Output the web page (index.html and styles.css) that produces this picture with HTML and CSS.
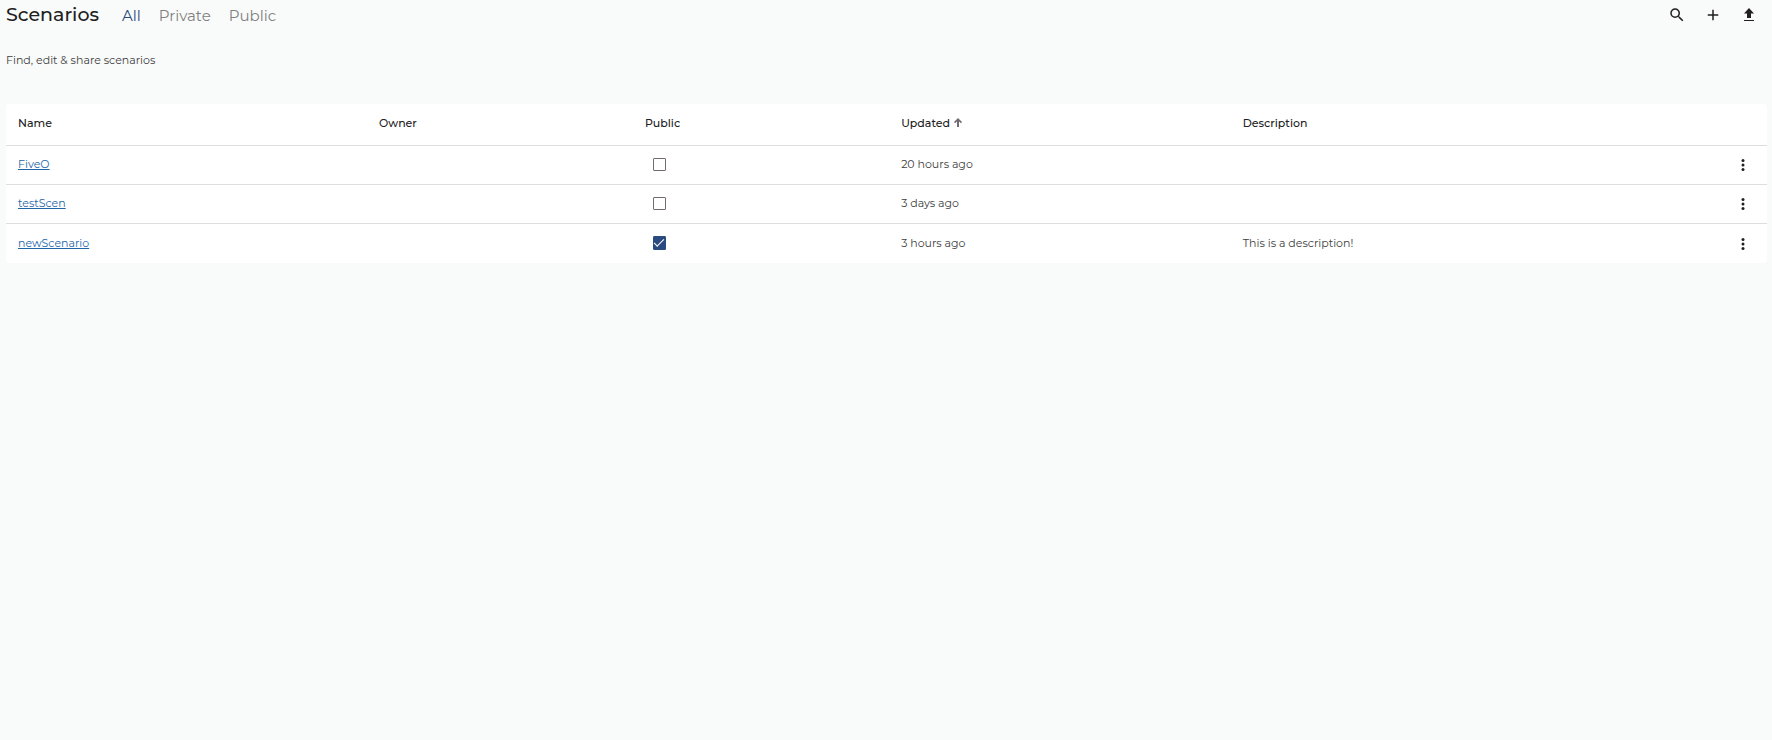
FILE: index.html
```html
<!DOCTYPE html>
<html lang="en">
<head>
    <meta charset="UTF-8">
    <meta name="viewport" content="width=device-width, initial-scale=1.0">
    <title>Scenarios</title>
    <link rel="stylesheet" href="styles.css">
</head>
<body>
    <header class="page-header">
        <h1 class="page-title">Scenarios</h1>
        <nav class="filters">
            <a href="#all" class="active">All</a>
            <a href="#private">Private</a>
            <a href="#public">Public</a>
        </nav>
        <div class="header-actions">
            <button type="button" class="icon-button" aria-label="Search">
                <svg viewBox="0 0 24 24"><path d="M15.5 14h-.79l-.28-.27A6.471 6.471 0 0 0 16 9.5 6.5 6.5 0 1 0 9.5 16c1.61 0 3.09-.59 4.23-1.57l.27.28v.79l5 4.99L20.49 19l-4.99-5zm-6 0C7.01 14 5 11.99 5 9.5S7.01 5 9.5 5 14 7.01 14 9.5 11.99 14 9.5 14z"/></svg>
            </button>
            <button type="button" class="icon-button" aria-label="Add scenario">
                <svg viewBox="0 0 24 24"><path d="M19 13h-6v6h-2v-6H5v-2h6V5h2v6h6z"/></svg>
            </button>
            <button type="button" class="icon-button" aria-label="Upload scenario">
                <svg viewBox="0 0 18 18"><path d="M9 2l5 5.500h-3V12H7V7.500H4zM4 14h10v1H4z"/></svg>
            </button>
        </div>
    </header>

    <p class="intro">Find, edit &amp; share scenarios</p>

    <table class="scenarios">
        <thead>
            <tr>
                <th class="col-name">Name</th>
                <th class="col-owner">Owner</th>
                <th class="col-public">Public</th>
                <th class="col-updated">
                    <span class="sorted">Updated
                        <svg viewBox="0 0 8 9"><path d="M4 0l4 4-1 1.200L5 3.500V9H3V3.500L1 5.200 0 4z"/></svg>
                    </span>
                </th>
                <th class="col-description">Description</th>
                <th class="col-menu"></th>
            </tr>
        </thead>
        <tbody>
            <tr>
                <td><a href="#fiveo">FiveO</a></td>
                <td></td>
                <td><input type="checkbox" aria-label="FiveO is public"></td>
                <td>20 hours ago</td>
                <td></td>
                <td class="col-menu">
                    <button type="button" class="icon-button" aria-label="FiveO menu">
                        <svg viewBox="0 0 24 24"><circle cx="12" cy="6" r="2"/><circle cx="12" cy="12" r="2"/><circle cx="12" cy="18" r="2"/></svg>
                    </button>
                </td>
            </tr>
            <tr>
                <td><a href="#testscen">testScen</a></td>
                <td></td>
                <td><input type="checkbox" aria-label="testScen is public"></td>
                <td>3 days ago</td>
                <td></td>
                <td class="col-menu">
                    <button type="button" class="icon-button" aria-label="testScen menu">
                        <svg viewBox="0 0 24 24"><circle cx="12" cy="6" r="2"/><circle cx="12" cy="12" r="2"/><circle cx="12" cy="18" r="2"/></svg>
                    </button>
                </td>
            </tr>
            <tr>
                <td><a href="#newscenario">newScenario</a></td>
                <td></td>
                <td><input type="checkbox" aria-label="newScenario is public" checked></td>
                <td>3 hours ago</td>
                <td>This is a description!</td>
                <td class="col-menu">
                    <button type="button" class="icon-button" aria-label="newScenario menu">
                        <svg viewBox="0 0 24 24"><circle cx="12" cy="6" r="2"/><circle cx="12" cy="12" r="2"/><circle cx="12" cy="18" r="2"/></svg>
                    </button>
                </td>
            </tr>
        </tbody>
    </table>
</body>
</html>
```

FILE: styles.css
```css
body {
    font-family: Montserrat, Inter, sans-serif;
    font-size: 11px;
    line-height: 16px;
    margin: 0;
    padding: 0 5px 0 6px;
    background-color: #f9fbfa;
    color: #404040;
}
.page-header {
    display: flex;
    align-items: center;
    height: 29px;
}
.page-title {
    margin: 0;
    font-size: 19px;
    font-weight: 500;
    line-height: 28px;
    color: #212121;
}
.filters {
    display: flex;
    gap: 18px;
    margin-left: 23px;
    padding-top: 2px;
    font-size: 15px;
    line-height: 24px;
}
.filters a {
    color: #808080;
    text-decoration: none;
}
.filters .active {
    color: #2a4b80;
}
.header-actions {
    display: flex;
    gap: 18px;
    margin-left: auto;
    padding-right: 9px;
}
.icon-button {
    display: block;
    width: 18px;
    height: 18px;
    padding: 0;
    border: none;
    background: none;
    color: #231f20;
    cursor: pointer;
}
.icon-button svg {
    display: block;
    width: 18px;
    height: 18px;
    fill: currentColor;
}
.intro {
    margin: 23px 0 36px;
}

/* Table */
.scenarios {
    width: 100%;
    table-layout: fixed;
    border-collapse: separate;
    border-spacing: 0;
    background-color: #fff;
    border-radius: 4px;
}
.scenarios th,
.scenarios td {
    box-sizing: border-box;
    height: 39px;
    padding: 0 12px 2px;
    text-align: left;
    font-weight: 400;
    border-bottom: 1px solid #dedede;
}
.scenarios th {
    height: 42px;
    padding-bottom: 4px;
    font-weight: 500;
    color: #212121;
}
.scenarios tbody tr:last-child td {
    border-bottom: none;
}
.scenarios a {
    color: #1f66a8;
    text-underline-offset: 1px;
}
.col-name {
    width: 20.5%;
}
.col-owner {
    width: 15.1%;
}
.col-public {
    width: 14.55%;
}
.col-updated {
    width: 19.4%;
}
.scenarios .col-menu {
    width: 48px;
    padding: 0 15px;
}
.sorted {
    display: flex;
    align-items: center;
    gap: 4px;
}
.sorted svg {
    width: 8px;
    height: 9px;
    fill: #756a70;
}

/* Checkboxes */
.scenarios input {
    appearance: none;
    display: block;
    box-sizing: border-box;
    width: 13px;
    height: 13px;
    margin: 0 0 0 8px;
    border: 1px solid #756a70;
    border-radius: 1px;
}
.scenarios input:checked {
    display: flex;
    align-items: center;
    justify-content: center;
    height: 14px;
    background-color: #2a4b80;
    border-color: #2a4b80;
}
.scenarios input:checked::before {
    content: "";
    box-sizing: border-box;
    width: 10px;
    height: 5px;
    margin-bottom: 3px;
    border: solid #fff;
    border-width: 0 0 1px 1px;
    transform: rotate(-45deg);
}
```
